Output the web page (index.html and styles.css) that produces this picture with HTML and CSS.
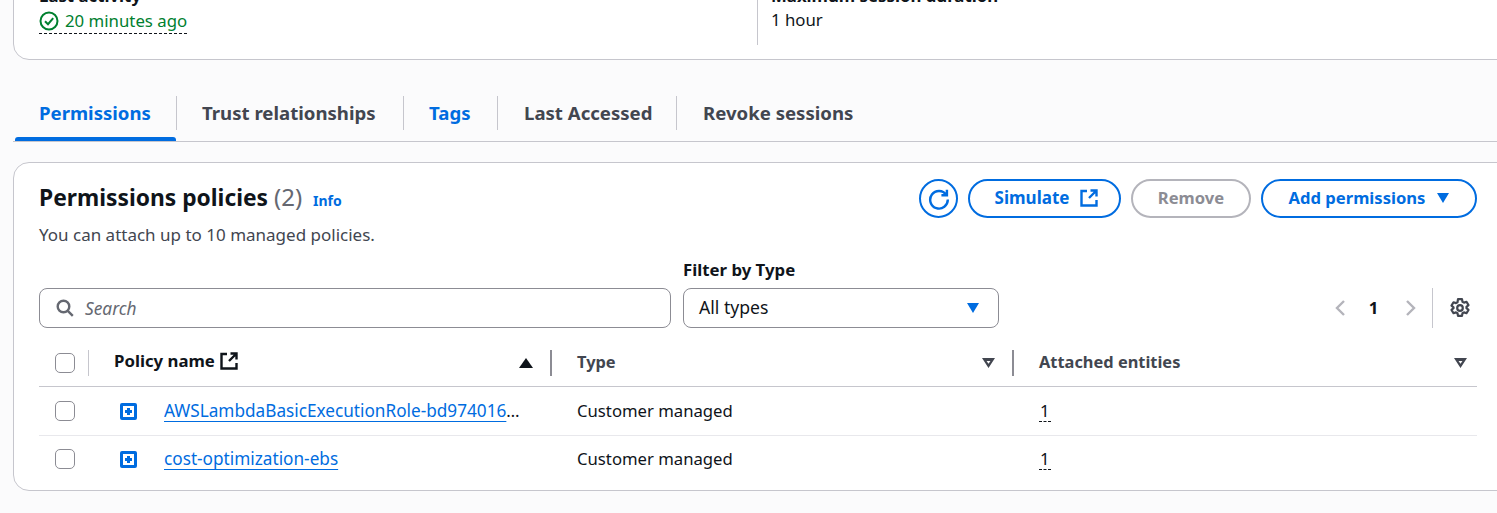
FILE: index.html
```html
<!DOCTYPE html>
<html lang="en">
<head>
    <meta charset="UTF-8">
    <meta name="viewport" content="width=device-width, initial-scale=1.0">
    <title>Role permissions</title>
    <link rel="stylesheet" href="styles.css">
</head>
<body>

    <!-- Role summary, scrolled partly out of view -->
    <section class="summary">
        <div class="summary-col summary-col-left">
            <div class="summary-label">Last activity</div>
            <div class="status-wrap">
                <span class="status">
                    <svg class="status-icon" viewBox="0 0 20 20" width="20" height="20" fill="none" stroke="#00802f" stroke-width="2">
                        <circle cx="10" cy="10" r="8.5"/>
                        <path d="M6 10.2l3 3 5.2-6"/>
                    </svg>
                    20 minutes ago
                </span>
            </div>
        </div>
        <div class="summary-col summary-col-right">
            <div class="summary-label">Maximum session duration</div>
            <div class="summary-value">1 hour</div>
        </div>
    </section>

    <nav class="tabs">
        <a class="tab tab-active">Permissions</a>
        <a class="tab tab-plain tab-trust">Trust relationships</a>
        <a class="tab tab-tags">Tags</a>
        <a class="tab tab-plain tab-accessed">Last Accessed</a>
        <a class="tab tab-plain tab-last">Revoke sessions</a>
    </nav>

    <section class="card">
        <div class="card-header">
            <div class="card-titles">
                <h2 class="card-title">Permissions policies <span class="count">(2)</span> <a class="info">Info</a></h2>
                <p class="card-desc">You can attach up to 10 managed policies.</p>
            </div>
            <div class="actions">
                <button class="btn btn-icon" aria-label="Refresh">
                    <svg viewBox="0 0 20 20" width="22" height="22" fill="none" stroke="#006ce0" stroke-width="2.200">
                        <path d="M16.600 6.200A8 8 0 1 0 18 10.500"/>
                        <path d="M17.200 1.600v5h-5"/>
                    </svg>
                </button>
                <button class="btn btn-sim">Simulate
                    <svg viewBox="0 0 18 18" width="18" height="18" fill="none" stroke="#006ce0" stroke-width="2.400">
                        <path d="M7 2H1.500v14.500h15V11"/>
                        <path d="M10.500 1.500h6v6M16.500 1.500L9 9"/>
                    </svg>
                </button>
                <button class="btn btn-disabled">Remove</button>
                <button class="btn btn-add">Add permissions <span class="caret"></span></button>
            </div>
        </div>

        <div class="filters">
            <div class="search">
                <svg viewBox="0 0 18 18" width="18" height="18" fill="none" stroke="#656871" stroke-width="2.400">
                    <circle cx="7.500" cy="7.500" r="5.800"/>
                    <path d="M11.800 11.800l5 5"/>
                </svg>
                <span class="search-text">Search</span>
            </div>
            <div class="type-filter">
                <label class="filter-label">Filter by Type</label>
                <div class="select"><span class="select-text">All types</span> <span class="caret"></span></div>
            </div>
            <div class="pager">
                <svg viewBox="0 0 12 18" width="12" height="18" fill="none" stroke="#b4b4bb" stroke-width="2.400"><path d="M10 2L3 9l7 7"/></svg>
                <span class="page-num">1</span>
                <svg viewBox="0 0 12 18" width="12" height="18" fill="none" stroke="#b4b4bb" stroke-width="2.400"><path d="M2 2l7 7-7 7"/></svg>
                <span class="pager-sep"></span>
                <svg class="gear" viewBox="0 0 20 20" width="20" height="20" fill="none" stroke="#424650" stroke-width="2.200" stroke-linejoin="round">
                    <circle cx="10" cy="10" r="2.800"/>
                    <path d="M8 1.200h4l.5 2.500 1.500.9 2.500-.8 2 3.300-2 1.700v1.400l2 1.700-2 3.300-2.500-.8-1.500.9-.5 2.500H8l-.5-2.500-1.500-.9-2.500.8-2-3.300 2-1.700V9.300l-2-1.700 2-3.300 2.500.8 1.500-.9z"/>
                </svg>
            </div>
        </div>

        <div class="table">
            <div class="row row-head">
                <div class="cell cell-check"><span class="checkbox"></span></div>
                <div class="cell cell-name">
                    <span class="head-label head-dark">Policy name
                        <svg viewBox="0 0 18 18" width="18" height="18" fill="none" stroke="#0f141a" stroke-width="2.400">
                            <path d="M7 2H1.500v14.500h15V11"/>
                            <path d="M10.500 1.500h6v6M16.500 1.500L9 9"/>
                        </svg>
                    </span>
                    <span class="sort sort-up"></span>
                </div>
                <div class="cell cell-col">
                    <span class="head-label">Type</span>
                    <span class="sort sort-down"></span>
                </div>
                <div class="cell cell-col cell-end">
                    <span class="head-label">Attached entities</span>
                    <span class="sort sort-down"></span>
                </div>
            </div>

            <div class="row row-body row-border">
                <div class="cell cell-check"><span class="checkbox"></span></div>
                <div class="cell cell-name-body">
                    <span class="expand"></span>
                    <div class="policy"><a class="policy-link">AWSLambdaBasicExecutionRole-bd974016-7f3a-4c21-9e55</a></div>
                </div>
                <div class="cell cell-text">Customer managed</div>
                <div class="cell cell-text"><span class="dashed">1</span></div>
            </div>
            <div class="row row-body">
                <div class="cell cell-check"><span class="checkbox"></span></div>
                <div class="cell cell-name-body">
                    <span class="expand"></span>
                    <div class="policy"><a class="policy-link">cost-optimization-ebs</a></div>
                </div>
                <div class="cell cell-text">Customer managed</div>
                <div class="cell cell-text"><span class="dashed">1</span></div>
            </div>
        </div>
    </section>

</body>
</html>
```

FILE: styles.css
```css
* {
    box-sizing: border-box;
}
html, body {
    height: 513px;
    overflow: hidden;
}
body {
    margin: 0;
    padding: 0 0 0 13px;
    font-family: 'Noto Sans', sans-serif;
    font-size: 16.8px;
    line-height: 22px;
    color: #0f141a;
    background-color: #fbfbfc;
}

/* summary card */
.summary {
    display: flex;
    height: 89px;
    margin: -29px -20px 0 0;
    padding-top: 10px;
    background-color: #fff;
    border: 1px solid #c6c6cd;
    border-radius: 16px;
}
.summary-col-left {
    width: 743px;
    padding: 3px 0 0 25px;
}
.summary-col-right {
    height: 63px;
    padding: 3px 0 0 13px;
    border-left: 1px solid #c6c6cd;
}
.summary-label {
    font-weight: 700;
    margin-bottom: 2px;
}
.status-wrap {
    display: flex;
}
.status {
    display: flex;
    align-items: center;
    gap: 6px;
    height: 25px;
    color: #00802f;
    border-bottom: 1px dashed #0f141a;
}
.summary-value {
    height: 24px;
}

/* tabs */
.tabs {
    display: flex;
    height: 46px;
    margin: 36px -20px 0 0;
    padding: 0 0 0 2px;
    border-bottom: 1px solid #c6c6cd;
}
.tab {
    position: relative;
    height: 34px;
    padding: 6px 0 0 25px;
    font-size: 18.6px;
    font-weight: 700;
    color: #006ce0;
    border-right: 1px solid #c6c6cd;
}
.tab-plain {
    color: #424650;
}
.tab-active {
    width: 162px;
    padding-left: 24px;
}
.tab-trust {
    width: 227px;
}
.tab-tags {
    width: 94px;
}
.tab-accessed {
    width: 179px;
    padding-left: 26px;
}
.tab-last {
    padding-left: 26px;
    border-right: none;
}
.tab-active::after {
    content: "";
    position: absolute;
    left: 0;
    right: 0;
    bottom: -11px;
    height: 4px;
    background-color: #006ce0;
    border-radius: 3px 3px 0 0;
}

/* permissions card */
.card {
    height: 329px;
    margin: 20px -20px 0 0;
    padding: 16px 39px 0 25px;
    background-color: #fff;
    border: 1px solid #c6c6cd;
    border-radius: 16px;
}
.card-header {
    display: flex;
    justify-content: space-between;
}
.card-title {
    margin: 3px 0 0;
    font-size: 22.8px;
    line-height: 30px;
    font-weight: 700;
}
.count {
    font-size: 24px;
    font-weight: 400;
    color: #656871;
}
.info {
    margin-left: 5px;
    font-size: 14px;
    color: #006ce0;
}
.card-desc {
    margin: 8px 0 0;
    font-size: 17px;
    color: #424650;
}
.actions {
    display: flex;
    gap: 10px;
}
.btn {
    display: flex;
    align-items: center;
    justify-content: center;
    height: 39px;
    padding: 0 0 2px;
    font-family: inherit;
    font-size: 16.6px;
    font-weight: 700;
    color: #006ce0;
    background-color: #fff;
    border: 2px solid #006ce0;
    border-radius: 20px;
}
.btn-icon {
    width: 39px;
    padding: 0;
}
.btn-sim {
    width: 153px;
    gap: 11px;
    padding-left: 4px;
    font-size: 17px;
}
.btn-disabled {
    width: 120px;
    color: #8c8c94;
    border-color: #b4b4bb;
}
.btn-add {
    width: 216px;
    gap: 12px;
}
.caret {
    width: 0;
    height: 0;
    border-left: 6.500px solid transparent;
    border-right: 6.500px solid transparent;
    border-top: 10px solid #006ce0;
}

/* filter row */
.filters {
    display: flex;
    align-items: flex-end;
    margin-top: 13px;
}
.search {
    display: flex;
    align-items: center;
    gap: 11px;
    width: 632px;
    height: 40px;
    padding-left: 16px;
    border: 1px solid #8c8c94;
    border-radius: 8px;
}
.search-text {
    margin-top: 1px;
    font-size: 17.3px;
    font-style: italic;
    color: #656871;
}
.type-filter {
    width: 316px;
    margin-left: 12px;
}
.filter-label {
    display: block;
    margin-bottom: 7px;
    font-weight: 700;
}
.select {
    display: flex;
    align-items: center;
    justify-content: space-between;
    height: 40px;
    padding: 0 19px 0 15px;
    border: 1px solid #8c8c94;
    border-radius: 8px;
}
.select-text {
    margin-bottom: 2px;
    font-size: 17.6px;
}
.pager {
    display: flex;
    align-items: center;
    height: 40px;
    margin-left: auto;
    margin-right: 7px;
}
.page-num {
    width: 59px;
    padding-right: 4px;
    text-align: center;
    font-weight: 700;
}
.pager-sep {
    width: 1px;
    height: 40px;
    margin: 0 17px 0 15px;
    background-color: #c6c6cd;
}

/* table */
.table {
    margin-top: 15px;
}
.row {
    display: grid;
    grid-template-columns: 50px 463px 462px 1fr;
}
.row-head {
    height: 44px;
    border-bottom: 1px solid #c6c6cd;
}
.row-body {
    height: 46px;
}
.row-border {
    height: 49px;
    border-bottom: 1px solid #e8e8ec;
}
.cell {
    display: flex;
    align-items: center;
}
.cell-check {
    padding-left: 16px;
}
.row-head .cell {
    height: 26px;
    margin-top: 7px;
}
.row-head .cell-check {
    border-right: 1px solid #c6c6cd;
}
.cell-name,
.cell-col {
    justify-content: space-between;
    padding: 0 17px 0 25px;
    border-right: 2px solid #8c8c94;
}
.cell-end {
    border-right: none;
    padding-right: 10px;
}
.checkbox {
    display: block;
    width: 20px;
    height: 20px;
    background-color: #fff;
    border: 1px solid #8c8c94;
    border-radius: 5px;
}
.head-label {
    display: flex;
    align-items: center;
    gap: 5px;
    padding-bottom: 2px;
    font-size: 16.4px;
    font-weight: 700;
    color: #424650;
}
.head-dark {
    padding-bottom: 4px;
    font-size: 16.8px;
    color: #0f141a;
}
.sort-up {
    width: 0;
    height: 0;
    border-left: 7px solid transparent;
    border-right: 7px solid transparent;
    border-bottom: 10px solid #0f141a;
}
.sort-down {
    width: 13px;
    height: 10px;
    background-color: #424650;
    clip-path: polygon(0 0, 100% 0, 50% 100%, 0 0, 35% 30%, 50% 58%, 65% 30%, 35% 30%);
}
.cell-name-body {
    padding-left: 31px;
}
.expand {
    flex: none;
    width: 17px;
    height: 17px;
    background-color: #fff;
    border: 3px solid #006ce0;
    border-radius: 2px;
    background-image: linear-gradient(#006ce0, #006ce0), linear-gradient(#006ce0, #006ce0);
    background-size: 7px 3px, 3px 7px;
    background-position: center;
    background-repeat: no-repeat;
}
.policy {
    width: 360px;
    margin-left: 27px;
    overflow: hidden;
    white-space: nowrap;
    text-overflow: ellipsis;
}
.policy-link {
    font-size: 17.2px;
    color: #006ce0;
    text-decoration: underline;
    text-underline-offset: 4px;
    text-decoration-thickness: 1px;
}
.cell-text {
    padding-left: 25px;
    font-size: 16.7px;
}
.dashed {
    padding: 0 1px;
    border-bottom: 1px dashed #0f141a;
    line-height: 21px;
}
```
